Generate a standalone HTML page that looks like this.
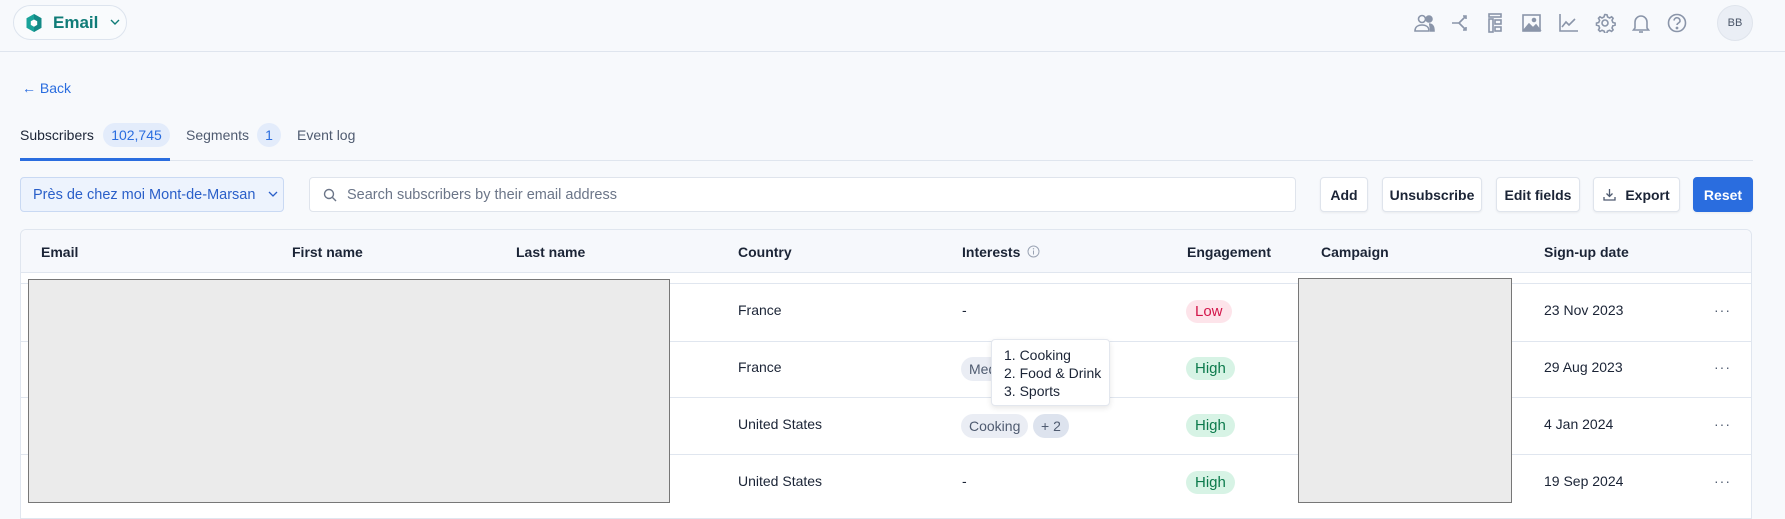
<!DOCTYPE html>
<html><head><meta charset="utf-8"><style>
*{box-sizing:border-box;margin:0;padding:0}
body{width:1785px;height:507px;overflow:hidden;background:#f7f9fc;font-family:"Liberation Sans",Arial,sans-serif;color:#1b2436;position:relative;font-size:14px}
.a{position:absolute;white-space:nowrap}
.top{left:0;top:0;width:1785px;height:52px;border-bottom:1px solid #dfe5ee}
.btn{top:177px;height:35px;background:#fff;border:1px solid #dfe4ec;border-radius:4px;font-weight:bold;font-size:14px;display:flex;align-items:center;justify-content:center;box-shadow:0 1px 2px rgba(0,0,0,.06)}
.hd{top:244px;font-weight:bold;font-size:14px}
.cell{font-size:14px}
.badge{height:23px;border-radius:12px;padding:0 9px;font-size:15px;display:flex;align-items:center}
.low{background:#fde4ea;color:#d3164a}
.high{background:#d7f3e5;color:#0c7a4c}
.chip{height:24px;border-radius:12px;background:#eaedf4;color:#4f5b70;font-size:14px;display:flex;align-items:center;padding:0 8px}
.line{left:20px;width:1732px;height:1px;background:#e0e6ef}
.dots{left:1714px;font-size:14px;color:#4f5b70;letter-spacing:1px}
.cnt{position:absolute;top:123px;height:24px;border-radius:12px;background:#e3ecfb;color:#2a6ddf;display:flex;align-items:center;justify-content:center;font-size:14px}
.tt{position:absolute;top:127px;font-size:14px;color:#4f5b70}
</style></head><body>
<div class="a top"></div>
<div class="a" style="left:13px;top:5px;width:114px;height:35px;border:1px solid #dde4ee;border-radius:18px;background:#f9fbfd;display:flex;align-items:center;padding-left:11px">
<svg width="18" height="20" viewBox="0 0 18 20"><path d="M9 1l7.5 4.3v9.4L9 19l-7.5-4.3V5.3z" fill="#1aa39a"/><path d="M9 1l7.5 4.3v9.4L9 19z" fill="#138a86"/><path d="M9 6.5l3.2 1.8v3.6L9 13.7l-3.2-1.8V8.3z" fill="#fff"/></svg>
<span style="margin-left:10px;font-size:17px;font-weight:bold;color:#107c78">Email</span>
<svg style="margin-left:12px" width="10" height="7" viewBox="0 0 10 7"><path d="M1 1l4 4 4-4" stroke="#107c78" stroke-width="1.4" fill="none"/></svg>
</div>
<svg class="a" style="left:1414px;top:13px" width="300" height="20" viewBox="0 0 300 20" fill="none" stroke="#8a95a9" stroke-width="1.6">
<circle cx="8" cy="6" r="3.5"/><path d="M1 18c0-4 3-6 7-6s7 2 7 6z"/><circle cx="15" cy="6" r="3" fill="#8a95a9"/><path d="M15 11c3 0 5 2 5 7h-4" fill="#8a95a9"/>
<path d="M38 10h7M45 10l6-6M45 10l6 6M49 3h3v3M49 17h3v-3"/>
<rect x="75" y="1" width="12" height="3"/><rect x="75" y="6" width="4" height="13"/><rect x="81" y="7" width="6" height="4"/><rect x="81" y="14" width="6" height="4"/>
<rect x="109" y="2" width="17" height="16"/><path d="M110 17l5-6 4 4 3-3 4 5z" fill="#8a95a9"/><circle cx="120" cy="7" r="1.5" fill="#8a95a9"/>
<path d="M146 1v17h18M148 14l4-5 3 3 6-6"/>
<circle cx="191" cy="10" r="3"/><path d="M191 1.5l2 .3.6 2.2 2 1 2-1.2 1.5 1.5-1.1 2 .9 2.2 2.2.6v2l-2.2.6-.9 2.2 1.1 2-1.5 1.5-2-1.1-2.2.9-.6 2.2h-2l-.6-2.2-2.2-.9-2 1.1-1.5-1.5 1.1-2-.9-2.2-2.2-.6v-2l2.2-.6.9-2.2-1.1-2 1.5-1.5 2 1.2 2-1 .6-2.2z"/>
<path d="M221 15V9a6 6 0 0112 0v6l1.5 2h-15z"/><path d="M225 19h4"/>
<circle cx="263" cy="10" r="8.5"/><path d="M260 7.5a3 3 0 116 .5c0 2-3 2-3 4"/><circle cx="263" cy="15" r=".6" fill="#8a95a9"/>
</svg>
<div class="a" style="left:1717px;top:5px;width:36px;height:36px;border-radius:50%;background:#eaeef5;border:1px solid #dfe4ec;font-size:11px;color:#4a5568;display:flex;align-items:center;justify-content:center">BB</div>

<div class="a" style="left:22px;top:80px;color:#2a6ddf;font-size:14px">&#8592; Back</div>

<div class="tt" style="left:20px;color:#1b2436">Subscribers</div>
<div class="cnt" style="left:103px;width:67px">102,745</div>
<div class="tt" style="left:186px">Segments</div>
<div class="cnt" style="left:257px;width:24px">1</div>
<div class="tt" style="left:297px">Event log</div>
<div class="a" style="left:20px;top:160px;width:1733px;height:1px;background:#dfe5ee"></div>
<div class="a" style="left:20px;top:158px;width:150px;height:3px;background:#2a6ddf"></div>

<div class="a" style="left:20px;top:177px;width:264px;height:35px;background:#edf3fd;border:1px solid #c9d9f3;border-radius:4px;color:#2a5fc9;font-size:14.5px;display:flex;align-items:center;padding-left:12px">Près de chez moi Mont-de-Marsan<svg style="margin-left:13px" width="10" height="7" viewBox="0 0 10 7"><path d="M1 1l4 4 4-4" stroke="#2a5fc9" stroke-width="1.3" fill="none"/></svg></div>
<div class="a" style="left:309px;top:177px;width:987px;height:35px;background:#fff;border:1px solid #dfe4ec;border-radius:4px;color:#6b7588;font-size:14.5px;display:flex;align-items:center;padding-left:13px"><svg width="14" height="14" viewBox="0 0 14 14" style="margin-right:10px"><circle cx="6" cy="6" r="4.5" stroke="#6b7588" stroke-width="1.4" fill="none"/><path d="M9.5 9.5L13 13" stroke="#6b7588" stroke-width="1.4"/></svg>Search subscribers by their email address</div>
<div class="a btn" style="left:1320px;width:48px">Add</div>
<div class="a btn" style="left:1382px;width:100px">Unsubscribe</div>
<div class="a btn" style="left:1496px;width:84px">Edit fields</div>
<div class="a btn" style="left:1593px;width:87px"><svg width="13" height="13" viewBox="0 0 13 13" style="margin-right:9px"><path d="M6.5 1v7M3.5 5.5l3 3 3-3M1 9v3h11V9" stroke="#4f5b70" stroke-width="1.3" fill="none"/></svg>Export</div>
<div class="a btn" style="left:1693px;width:60px;background:#2a6ddf;border-color:#2a6ddf;color:#fff">Reset</div>

<div class="a" style="left:20px;top:229px;width:1732px;height:290px;background:#fff;border:1px solid #e0e6ef;border-radius:6px 6px 0 0"></div>
<div class="a" style="left:21px;top:230px;width:1730px;height:42px;background:#f6f8fc;border-radius:6px 6px 0 0"></div>
<div class="a line" style="top:272px"></div>
<div class="a line" style="top:283px"></div>
<div class="a line" style="top:341px"></div>
<div class="a line" style="top:397px"></div>
<div class="a line" style="top:454px"></div>
<div class="a hd" style="left:41px">Email</div>
<div class="a hd" style="left:292px">First name</div>
<div class="a hd" style="left:516px">Last name</div>
<div class="a hd" style="left:738px">Country</div>
<div class="a hd" style="left:962px">Interests</div>
<svg class="a" style="left:1027px;top:245px" width="13" height="13" viewBox="0 0 13 13"><circle cx="6.5" cy="6.5" r="5.5" stroke="#9aa3b3" fill="none"/><path d="M6.5 5.5v4" stroke="#9aa3b3"/><circle cx="6.5" cy="3.8" r=".7" fill="#9aa3b3"/></svg>
<div class="a hd" style="left:1187px">Engagement</div>
<div class="a hd" style="left:1321px">Campaign</div>
<div class="a hd" style="left:1544px">Sign-up date</div>

<div class="a cell" style="left:738px;top:302px">France</div>
<div class="a cell" style="left:738px;top:359px">France</div>
<div class="a cell" style="left:738px;top:416px">United States</div>
<div class="a cell" style="left:738px;top:473px">United States</div>
<div class="a cell" style="left:962px;top:302px">-</div>
<div class="a cell" style="left:962px;top:473px">-</div>
<div class="a chip" style="left:961px;top:357px;width:60px">Media</div>
<div class="a chip" style="left:961px;top:414px">Cooking</div>
<div class="a chip" style="left:1033px;top:414px;background:#dde3ee">+ 2</div>
<div class="a" style="left:991px;top:339px;width:119px;height:67px;background:#fff;border:1px solid #e3e7ee;border-radius:4px;box-shadow:0 2px 6px rgba(0,0,0,.1);padding:6px 0 0 12px;font-size:14px;line-height:18px;color:#1b2436">1. Cooking<br>2. Food &amp; Drink<br>3. Sports</div>
<div class="a badge low" style="left:1186px;top:300px">Low</div>
<div class="a badge high" style="left:1186px;top:357px">High</div>
<div class="a badge high" style="left:1186px;top:414px">High</div>
<div class="a badge high" style="left:1186px;top:471px">High</div>
<div class="a cell" style="left:1544px;top:302px">23 Nov 2023</div>
<div class="a cell" style="left:1544px;top:359px">29 Aug 2023</div>
<div class="a cell" style="left:1544px;top:416px">4 Jan 2024</div>
<div class="a cell" style="left:1544px;top:473px">19 Sep 2024</div>
<div class="a dots" style="top:302px">···</div>
<div class="a dots" style="top:359px">···</div>
<div class="a dots" style="top:416px">···</div>
<div class="a dots" style="top:473px">···</div>

<div class="a" style="left:28px;top:279px;width:642px;height:224px;background:#ebebeb;border:1.5px solid #777"></div>
<div class="a" style="left:1298px;top:278px;width:214px;height:225px;background:#ebebeb;border:1.5px solid #777"></div>
</body></html>
